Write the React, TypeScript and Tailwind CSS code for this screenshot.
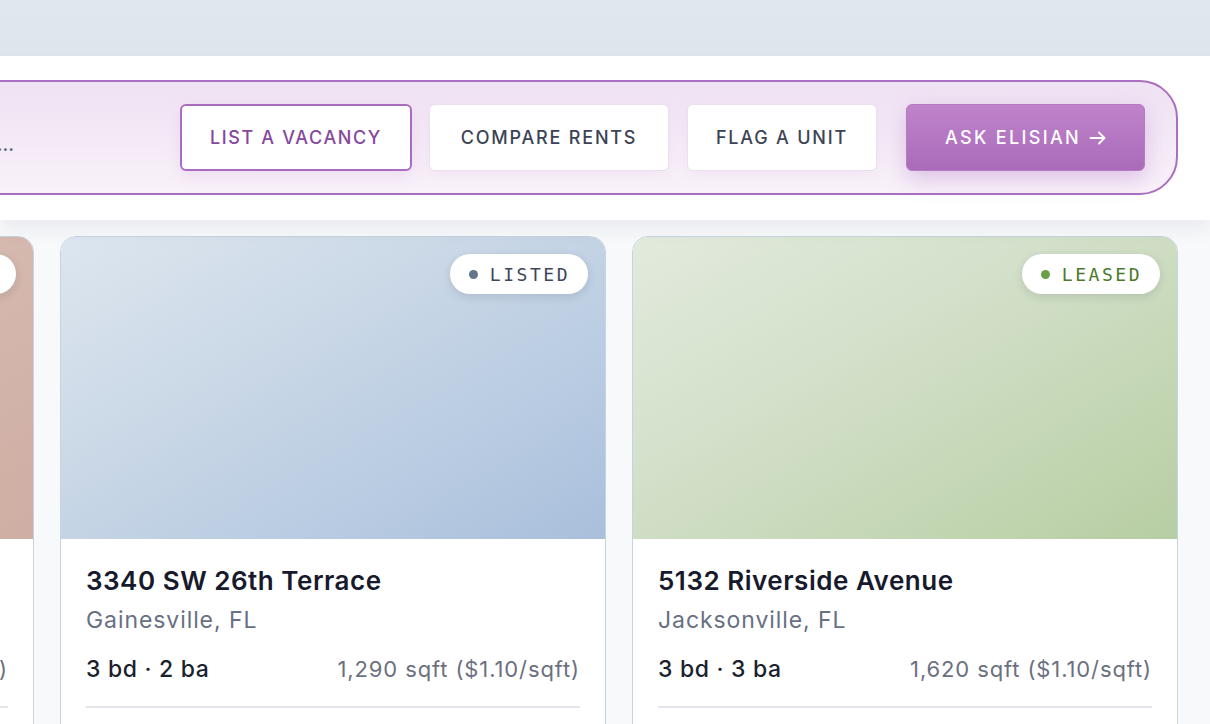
import type { ReactNode } from "react";

type Listing = {
  address: string;
  city: string;
  beds: string;
  area: string;
  status: "listed" | "leased" | "pending";
};

const listings: Listing[] = [
  {
    address: "1812 NW 13th Street",
    city: "Gainesville, FL",
    beds: "2 bd · 1 ba",
    area: "980 sqft ($1.25/sqft)",
    status: "pending",
  },
  {
    address: "3340 SW 26th Terrace",
    city: "Gainesville, FL",
    beds: "3 bd · 2 ba",
    area: "1,290 sqft ($1.10/sqft)",
    status: "listed",
  },
  {
    address: "5132 Riverside Avenue",
    city: "Jacksonville, FL",
    beds: "3 bd · 3 ba",
    area: "1,620 sqft ($1.10/sqft)",
    status: "leased",
  },
];

const imageBg: Record<string, string> = {
  pending: "bg-[linear-gradient(155deg,#dcc6be_0%,#d4b7ad_50%,#cfaea3_100%)]",
  listed: "bg-[linear-gradient(150deg,#dde6ef_0%,#ccd9e7_35%,#b9cce2_70%,#a9bfdb_100%)]",
  leased: "bg-[linear-gradient(150deg,#e2eadd_0%,#d3e0ca_40%,#c3d6b3_75%,#b7cda2_100%)]",
};

const badgeStyle: Record<string, { dot: string; text: string; label: string }> = {
  pending: { dot: "bg-[#c0846f]", text: "text-[#8a5140]", label: "PENDING" },
  listed: { dot: "bg-[#64748b]", text: "text-[#3d4759]", label: "LISTED" },
  leased: { dot: "bg-[#6a9f45]", text: "text-[#4a7a2a]", label: "LEASED" },
};

function ToolButton({
  children,
  width,
  variant = "plain",
}: {
  children: ReactNode;
  width: string;
  variant?: "plain" | "outline" | "primary";
}) {
  const base =
    "flex h-[67px] items-center justify-center rounded-[6px] text-[18px] font-medium uppercase whitespace-nowrap";
  const styles = {
    plain:
      "tracking-[0.1em] border-[1.5px] border-[#ecdff1] bg-white text-[#3d4356] shadow-[0_4px_14px_rgba(169,108,191,0.06)]",
    outline:
      "tracking-[0.09em] border-2 border-[#a96cbf] bg-white text-[#86479c] shadow-[0_6px_16px_rgba(169,108,191,0.12)]",
    primary:
      "tracking-[0.13em] border border-[#b57ac3] bg-[linear-gradient(180deg,#bf83cb_0%,#aa6bb9_100%)] text-white shadow-[0_8px_22px_rgba(169,108,191,0.35)]",
  }[variant];
  return <button className={`${base} ${styles} ${width}`}>{children}</button>;
}

function ListingCard({ item }: { item: Listing }) {
  const badge = badgeStyle[item.status];
  return (
    <article className="overflow-hidden rounded-[16px] border-[1.5px] border-[#c6d3e1] bg-white">
      <div className={`relative h-[302px] ${imageBg[item.status]}`}>
        <span className="absolute right-[17px] top-[17px] flex h-[40px] items-center gap-[12px] rounded-full bg-white pl-[19px] pr-[18px] shadow-[0_3px_10px_rgba(15,23,42,0.12)]">
          <span className={`h-[9px] w-[9px] rounded-full ${badge.dot}`} />
          <span className={`font-['DejaVu_Sans_Mono',monospace] text-[18px] font-medium tracking-[0.14em] ${badge.text}`}>
            {badge.label}
          </span>
        </span>
      </div>
      <div className="px-[25px] pt-[26px]">
        <h3 className="text-[26px] font-semibold leading-[32px] tracking-[0.02em] text-[#171a2c]">{item.address}</h3>
        <p className="mt-[7px] text-[23px] leading-[32px] tracking-[0.04em] text-[#687083]">{item.city}</p>
        <div className="mt-[17px] flex items-center justify-between leading-[32px]">
          <span className="text-[23px] font-medium tracking-[0.03em] text-[#1b1f2e]">{item.beds}</span>
          <span className="text-[22px] tracking-[0.04em] text-[#6b7080]">{item.area}</span>
        </div>
        <div className="mt-[21px] h-[2px] bg-[#e3e7ed]" />
        <div className="h-[60px]" />
      </div>
    </article>
  );
}

export default function App() {
  return (
    <div className="h-[724px] w-[1210px] overflow-hidden bg-[#f8f9fb] font-['Inter',sans-serif]">
      <div className="h-[56px] bg-[linear-gradient(180deg,#e1e7ee_0%,#dfe5ed_100%)]" />
      <section className="relative z-10 bg-white pb-[25px] pr-[32px] pt-[24px] shadow-[0_10px_18px_rgba(15,23,42,0.06)]">
        <div className="-ml-[300px] flex items-center rounded-r-[38px] border-2 border-[#ab6fc0] bg-[linear-gradient(180deg,#efe2f3_0%,#f4eaf6_55%,#f9f2fa_100%)] py-[22px] pl-[24px] pr-[31px]">
          <div className="w-[288px] whitespace-nowrap pt-[14px] text-right text-[18px] font-semibold text-[#5f6576]">
            Ask Elisian anything....
          </div>
          <div className="flex-1" />
          <div className="flex items-center">
            <ToolButton variant="outline" width="w-[232px]">
              List a vacancy
            </ToolButton>
            <div className="w-[17px]" />
            <ToolButton width="w-[240px]">Compare rents</ToolButton>
            <div className="w-[18px]" />
            <ToolButton width="w-[190px]">Flag a unit</ToolButton>
            <div className="w-[29px]" />
            <ToolButton variant="primary" width="w-[239px]">
              <span>Ask Elisian</span>
              <svg
                className="ml-[8px]"
                width="17"
                height="14"
                viewBox="0 0 17 14"
                fill="none"
                stroke="currentColor"
                strokeWidth="1.8"
                strokeLinecap="round"
                strokeLinejoin="round"
              >
                <path d="M1.5 7h14M10 1.5 15.5 7 10 12.5" />
              </svg>
            </ToolButton>
          </div>
        </div>
      </section>
      <div className="-ml-[512px] mt-[16px] grid w-[1690px] grid-cols-[546px_546px_546px] gap-[26px]">
        {listings.map((item) => (
          <ListingCard key={item.address} item={item} />
        ))}
      </div>
    </div>
  );
}
